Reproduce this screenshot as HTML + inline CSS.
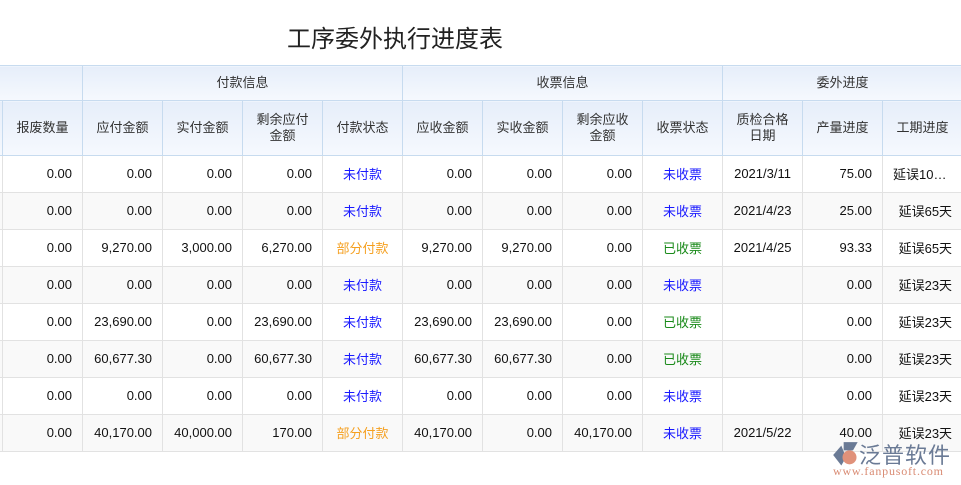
<!DOCTYPE html>
<html><head><meta charset="utf-8"><style>
body{margin:0;width:961px;height:485px;background:#fff;overflow:hidden;position:relative;font-family:"Liberation Sans","Noto Sans CJK SC",sans-serif;}
.title{position:absolute;left:0;width:790px;top:19px;text-align:center;font-size:24px;color:#222;}
table{position:absolute;left:-78px;top:65px;width:1040px;border-collapse:collapse;table-layout:fixed;font-size:13px;color:#111;}
td,th{border:1px solid #e2e2e2;height:34px;padding:0 10px 2px;text-align:right;white-space:nowrap;overflow:hidden;}
th{font-weight:normal;text-align:center;color:#333;background:linear-gradient(#e6eefa,#f6f9fe);border-color:#c7dbef;padding:0 4px;line-height:16px;}
tr.h1 th{height:34px;}
tr.h2 th{height:54px;}
tr:nth-child(even) td{background:#f9f9f9;}
.c{text-align:center;}
.b{color:#1a1aff;text-align:center;}
.o{color:#f5a020;text-align:center;}
.g{color:#1a8a1a;text-align:center;}
.l{text-align:left;padding-left:10px;}
.logo{position:absolute;left:830px;top:440px;}
</style></head><body>
<div class="title">工序委外执行进度表</div>
<table>
<colgroup><col style="width:80px"><col style="width:80px"><col style="width:80px"><col style="width:80px"><col style="width:80px"><col style="width:80px"><col style="width:80px"><col style="width:80px"><col style="width:80px"><col style="width:80px"><col style="width:80px"><col style="width:80px"><col style="width:80px"></colgroup>
<tr class="h1"><th colspan="2"></th><th colspan="4">付款信息</th><th colspan="4">收票信息</th><th colspan="3">委外进度</th></tr>
<tr class="h2"><th></th><th>报废数量</th><th>应付金额</th><th>实付金额</th><th>剩余应付<br>金额</th><th>付款状态</th><th>应收金额</th><th>实收金额</th><th>剩余应收<br>金额</th><th>收票状态</th><th>质检合格<br>日期</th><th>产量进度</th><th>工期进度</th></tr>
<tr><td></td><td>0.00</td><td>0.00</td><td>0.00</td><td>0.00</td><td class="b">未付款</td><td>0.00</td><td>0.00</td><td>0.00</td><td class="b">未收票</td><td class="c">2021/3/11</td><td>75.00</td><td class="l">延误10…</td></tr>
<tr><td></td><td>0.00</td><td>0.00</td><td>0.00</td><td>0.00</td><td class="b">未付款</td><td>0.00</td><td>0.00</td><td>0.00</td><td class="b">未收票</td><td class="c">2021/4/23</td><td>25.00</td><td>延误65天</td></tr>
<tr><td></td><td>0.00</td><td>9,270.00</td><td>3,000.00</td><td>6,270.00</td><td class="o">部分付款</td><td>9,270.00</td><td>9,270.00</td><td>0.00</td><td class="g">已收票</td><td class="c">2021/4/25</td><td>93.33</td><td>延误65天</td></tr>
<tr><td></td><td>0.00</td><td>0.00</td><td>0.00</td><td>0.00</td><td class="b">未付款</td><td>0.00</td><td>0.00</td><td>0.00</td><td class="b">未收票</td><td></td><td>0.00</td><td>延误23天</td></tr>
<tr><td></td><td>0.00</td><td>23,690.00</td><td>0.00</td><td>23,690.00</td><td class="b">未付款</td><td>23,690.00</td><td>23,690.00</td><td>0.00</td><td class="g">已收票</td><td></td><td>0.00</td><td>延误23天</td></tr>
<tr><td></td><td>0.00</td><td>60,677.30</td><td>0.00</td><td>60,677.30</td><td class="b">未付款</td><td>60,677.30</td><td>60,677.30</td><td>0.00</td><td class="g">已收票</td><td></td><td>0.00</td><td>延误23天</td></tr>
<tr><td></td><td>0.00</td><td>0.00</td><td>0.00</td><td>0.00</td><td class="b">未付款</td><td>0.00</td><td>0.00</td><td>0.00</td><td class="b">未收票</td><td></td><td>0.00</td><td>延误23天</td></tr>
<tr><td></td><td>0.00</td><td>40,170.00</td><td>40,000.00</td><td>170.00</td><td class="o">部分付款</td><td>40,170.00</td><td>0.00</td><td>40,170.00</td><td class="b">未收票</td><td class="c">2021/5/22</td><td>40.00</td><td>延误23天</td></tr>
</table>
<div class="logo">
<svg width="28" height="28" viewBox="0 0 24 24" style="position:absolute;left:2px;top:1px"><path d="M10 1 L22 1 L18 8 L10 8 Z" fill="#6a7a95"/><path d="M8 4 L1 12 L8 21 L12 14 Z" fill="#6a7a95"/><circle cx="15" cy="14" r="6" fill="#e0917a"/></svg>
<div style="position:absolute;left:29px;top:-2px;font-size:22px;color:#6a7a95;white-space:nowrap;letter-spacing:1px">泛普软件</div>
<div style="position:absolute;left:3px;top:24px;font-size:12px;color:#d98b73;font-family:'Liberation Serif',serif;white-space:nowrap;letter-spacing:0.8px">www.fanpusoft.com</div>
</div>
</body></html>
